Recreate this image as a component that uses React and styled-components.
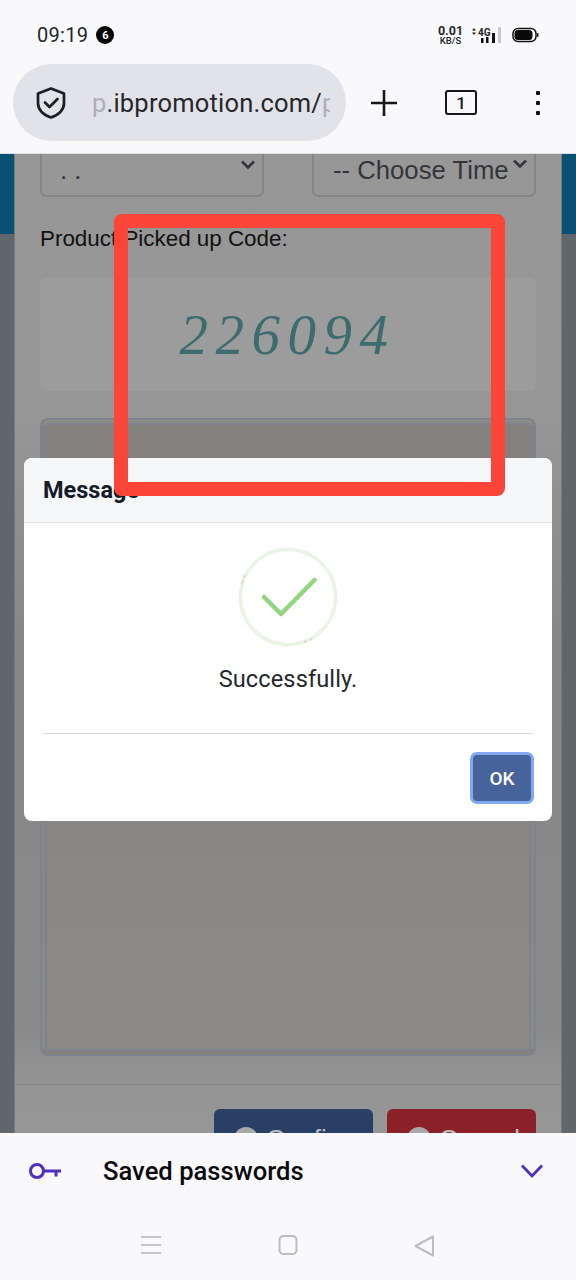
import React from 'react';
import styled, { createGlobalStyle } from 'styled-components';

const Global = createGlobalStyle`
  html, body { margin: 0; padding: 0; background: #f9f9fc; }
  * { box-sizing: border-box; }
`;

const Phone = styled.div`
  width: 576px; height: 1280px; display: flex; flex-direction: column; overflow: hidden;
  font-family: Roboto, "Liberation Sans", sans-serif; background: #f9f9fc;
`;
const Chrome = styled.header`
  height: 154px; flex: none; display: flex; flex-direction: column; background: #f9f9fc;
  border-bottom: 1px solid #dddde0;
`;
const StatusBar = styled.div`
  height: 64px; display: flex; align-items: center; padding: 6px 37px 0 37px; gap: 8px;
`;
const Time = styled.span`font-size: 20px; color: #25262a; letter-spacing: 0.3px;`;
const Badge = styled.span`
  width: 18px; height: 18px; border-radius: 50%; background: #050505; color: #fff;
  font-size: 11px; font-weight: 700; display: flex; align-items: center; justify-content: center;
`;
const StatusRight = styled.div`margin-left: auto; display: flex; align-items: center;`;
const Speed = styled.div`
  display: flex; flex-direction: column; align-items: center; color: #25262a; font-weight: 700;
  line-height: 11px; font-size: 12.5px; margin-right: 9px; width: 23px;
  small { font-size: 9.5px; line-height: 9px; font-weight: 500; white-space: nowrap; }
`;
const SignalIcon = styled.svg`margin-right: 11px;`;
const BrowserBar = styled.div`
  height: 77px; display: flex; align-items: center; padding-left: 13px;
`;
const UrlPill = styled.div`
  width: 333px; height: 77px; border-radius: 39px; background: #e2e2e9; display: flex; align-items: center;
  padding-left: 22px; gap: 25px;
`;
const UrlText = styled.div`
  font-size: 25.5px; color: #26272b; letter-spacing: 0.2px; white-space: nowrap; width: 238px; overflow: hidden;
`;
const Faded = styled.span`color: #aeaeb4;`;
const PlusButton = styled.div`margin-left: 25px; display: flex;`;
const TabCount = styled.div`
  margin-left: 48px; width: 32px; height: 25px; border: 2px solid #17171a; border-radius: 3px;
  display: flex; align-items: center; justify-content: center; font-size: 17px; font-weight: 500; color: #17171a;
`;
const MoreDots = styled.div`
  margin-left: 59px; display: flex; flex-direction: column; gap: 6px; padding-top: 1px;
  i { display: block; width: 4px; height: 4px; background: #111; border-radius: 1px; }
`;

const Content = styled.main`
  position: relative; flex: 1; min-height: 0; overflow: hidden; padding: 0 14px;
  background: linear-gradient(#0a5072 80px, #5f666c 80px, #60676c 100%);
`;
const Panel = styled.section`
  margin-top: -30px; height: 1100px; padding: 0 25px; display: flex; flex-direction: column;
  border-left: 1px solid #7a7a7a; border-right: 1px solid #7a7a7a;
  background: linear-gradient(#979797 0, #969696 300px, #868686 520px, #8a8a8a 900px, #949494 960px, #9a9a9a 100%);
`;
const SelectRow = styled.div`display: flex; justify-content: space-between;`;
const FakeSelect = styled.div`
  position: relative; height: 73px; width: ${p => p.$w}px; border: 2px solid #848484; border-radius: 6px;
  color: #33353a; font-family: "Liberation Sans", sans-serif; font-size: 25.7px; padding: 30px 0 0 ${p => p.$pad}px; white-space: nowrap;
`;
const SelectChevron = styled.svg`position: absolute; right: 6px; top: ${p => p.$top}px;`;
const Label = styled.div`
  margin-top: 29px; font-family: "Liberation Sans", sans-serif; font-size: 22.4px; line-height: 26px; color: #111;
`;
const CodeBox = styled.div`
  margin-top: 26px; height: 113px; border-radius: 6px; background: #9c9c9c; display: flex; align-items: center; justify-content: center;
  font-family: "Liberation Serif", serif; font-style: italic; font-size: 57px; letter-spacing: 7.5px; color: #3c6c6e;
  padding-right: 1px;
`;
const TextArea = styled.div`
  margin-top: 27px; height: 638px; border-radius: 8px; border: 7px double #7e848b;
  background: linear-gradient(#83807e, #8c8a89);
`;
const Footer = styled.div`
  margin: 28px -25px 0; padding: 24px 25px 0; border-top: 1px solid #858585; display: flex; justify-content: flex-end; gap: 14px;
`;
const ActionButton = styled.div`
  width: ${p => p.$w}px; height: 60px; border-radius: 6px; background: ${p => p.$bg}; color: #b9bcc2;
  display: flex; align-items: flex-start; gap: 8px; padding: 15px 0 0 20px; font-size: 26px; line-height: 30px;
  font-family: "Liberation Sans", sans-serif;
`;
const ActionDot = styled.span`
  width: 24px; height: 24px; border-radius: 50%; background: #a9a9a9; flex: none; margin-top: 3px;
`;

const Modal = styled.div`
  position: absolute; left: 24px; top: 304px; width: 528px; height: 363px; border-radius: 8px; background: #fff;
  display: flex; flex-direction: column; overflow: hidden;
`;
const ModalHeader = styled.div`
  height: 65px; flex: none; background: #f5f6f8; border-bottom: 1px solid #e2e4e7; padding-left: 19px;
  display: flex; align-items: center; font-size: 23.5px; font-weight: 700; color: #141b2b;
`;
const ModalBody = styled.div`
  flex: none; height: 211px; margin: 0 19px; padding-top: 24px; border-bottom: 1px solid #d9d9d9;
  display: flex; flex-direction: column; align-items: center;
`;
const Message = styled.div`margin-top: 16px; font-size: 23.6px; line-height: 32px; color: #25282e; letter-spacing: 0.1px;`;
const ModalFooter = styled.div`display: flex; justify-content: flex-end; padding: 18px 18px 0;`;
const OkButton = styled.div`
  width: 64px; height: 52px; border-radius: 7px; background: #47639b; border: 3px solid #82a8f0;
  color: #fff; font-size: 19px; font-weight: 500; display: flex; align-items: center; justify-content: center;
`;
const Annotation = styled.div`
  position: absolute; left: 114px; top: 60px; width: 391px; height: 282px;
  border: 14px solid #fb4539; border-radius: 8px;
`;

const Sheet = styled.footer`
  height: 147px; flex: none; background: #f9f9fc; display: flex; flex-direction: column;
`;
const SavedRow = styled.div`
  height: 76px; display: flex; align-items: center; padding: 0 32px 0 28px;
`;
const SavedLabel = styled.span`
  margin-left: 41px; font-size: 25.6px; font-weight: 500; color: #0b0b0e;
`;
const NavBar = styled.nav`
  flex: 1; display: flex; align-items: flex-start; padding: 26px 0 0 140px; gap: 116px;
`;
const RowEnd = styled.span`margin-left: auto; display: flex;`;

export default function App() {
  return (
    <Phone>
      <Global />
      <Chrome>
        <StatusBar>
          <Time>09:19</Time>
          <Badge>6</Badge>
          <StatusRight>
            <Speed>0.01<small>KB/S</small></Speed>
            <SignalIcon width="30" height="16" viewBox="0 0 30 16">
              <path d="M1 3.500 3 1 5 3.500zM1 5.500 3 8 5 5.500z" fill="#222" />
              <text x="7" y="9" fontSize="10" fontWeight="700" fontFamily="Roboto" fill="#222">4G</text>
              <rect x="10" y="11" width="2.500" height="5" fill="#111" />
              <rect x="15" y="10" width="2.500" height="6" fill="#111" />
              <rect x="21" y="6" width="3" height="10" fill="#111" />
              <rect x="27" y="0" width="3" height="16" fill="#c9c9cc" />
            </SignalIcon>
            <svg width="27" height="16" viewBox="0 0 27 16">
              <rect x="1" y="1.500" width="23" height="13" rx="5" fill="#fff" stroke="#111" strokeWidth="1.500" />
              <rect x="2.500" y="3" width="18" height="10" rx="3.500" fill="#0a0a0a" />
              <rect x="25" y="6" width="1.500" height="4" rx="0.700" fill="#111" />
            </svg>
          </StatusRight>
        </StatusBar>
        <BrowserBar>
          <UrlPill>
            <svg width="32" height="34" viewBox="0 0 32 34" fill="none" stroke="#1d1e22" strokeWidth="2.700" strokeLinejoin="round" strokeLinecap="round">
              <path d="M16 2.500 29 7.500v9.500c0 7-5.500 11.800-13 14.500C8.500 28.800 3 24 3 17V7.500z" />
              <path d="M10 16.500l4.500 4.500 8-8" />
            </svg>
            <UrlText><Faded>p</Faded>.ibpromotion.com/<Faded>p</Faded></UrlText>
          </UrlPill>
          <PlusButton>
            <svg width="26" height="26" viewBox="0 0 26 26" stroke="#17171a" strokeWidth="2.600">
              <path d="M13 0v26M0 13h26" />
            </svg>
          </PlusButton>
          <TabCount>1</TabCount>
          <MoreDots><i /><i /><i /></MoreDots>
        </BrowserBar>
      </Chrome>

      <Content>
        <Panel>
          <SelectRow>
            <FakeSelect $w={224} $pad={18}>. .
              <SelectChevron $top={33} width="16" height="12" viewBox="0 0 16 12" fill="none" stroke="#33353a" strokeWidth="2.500"><path d="M2 2.500 8 8.500 14 2.500" /></SelectChevron>
            </FakeSelect>
            <FakeSelect $w={224} $pad={19}>-- Choose Time
              <SelectChevron $top={32} width="16" height="12" viewBox="0 0 16 12" fill="none" stroke="#33353a" strokeWidth="2.500"><path d="M2 2.500 8 8.500 14 2.500" /></SelectChevron>
            </FakeSelect>
          </SelectRow>
          <Label>Product Picked up Code:</Label>
          <CodeBox>226094</CodeBox>
          <TextArea />
          <Footer>
            <ActionButton $w={159} $bg="#2a3f66"><ActionDot />Confirm</ActionButton>
            <ActionButton $w={149} $bg="#8c2029"><ActionDot />Cancel</ActionButton>
          </Footer>
        </Panel>

        <Modal>
          <ModalHeader>Message</ModalHeader>
          <ModalBody>
            <svg width="100" height="100" viewBox="0 0 100 100" fill="none">
              <circle cx="50" cy="50" r="47.500" stroke="#e9f4e5" strokeWidth="3.500" />
              <path d="M3.500 37l1.500-4M5.500 31l1-3M66 95l3-1M72 93l2-1" stroke="#ccdac8" strokeWidth="1.500" />
              <path d="M26 50 43 67 76.500 33" stroke="#92d67f" strokeWidth="4.500" strokeLinejoin="round" strokeLinecap="round" />
            </svg>
            <Message>Successfully.</Message>
          </ModalBody>
          <ModalFooter><OkButton>OK</OkButton></ModalFooter>
        </Modal>
        <Annotation />
      </Content>

      <Sheet>
        <SavedRow>
          <svg width="34" height="20" viewBox="0 0 34 20" fill="none" stroke="#4f2fc0" strokeWidth="3">
            <circle cx="9" cy="10" r="6.500" />
            <path d="M15.500 10H33M28 10v5.500" />
          </svg>
          <SavedLabel>Saved passwords</SavedLabel>
          <RowEnd>
            <svg width="24" height="16" viewBox="0 0 24 16" fill="none" stroke="#4f2fc0" strokeWidth="2.800">
              <path d="M2 2.500 12 13 22 2.500" />
            </svg>
          </RowEnd>
        </SavedRow>
        <NavBar>
          <svg width="22" height="20" viewBox="0 0 22 20" stroke="#c4c4c8" strokeWidth="2"><path d="M1 2h20M1 10h20M1 18h20" /></svg>
          <svg width="20" height="20" viewBox="0 0 20 20" fill="none" stroke="#bdbdc1" strokeWidth="2"><rect x="1.500" y="1" width="17" height="18" rx="4" /></svg>
          <svg width="21" height="22" viewBox="0 0 21 22" fill="none" stroke="#bdbdc1" strokeWidth="2" strokeLinejoin="round"><path d="M19 1.500 1.500 11 19 20.500z" /></svg>
        </NavBar>
      </Sheet>
    </Phone>
  );
}
